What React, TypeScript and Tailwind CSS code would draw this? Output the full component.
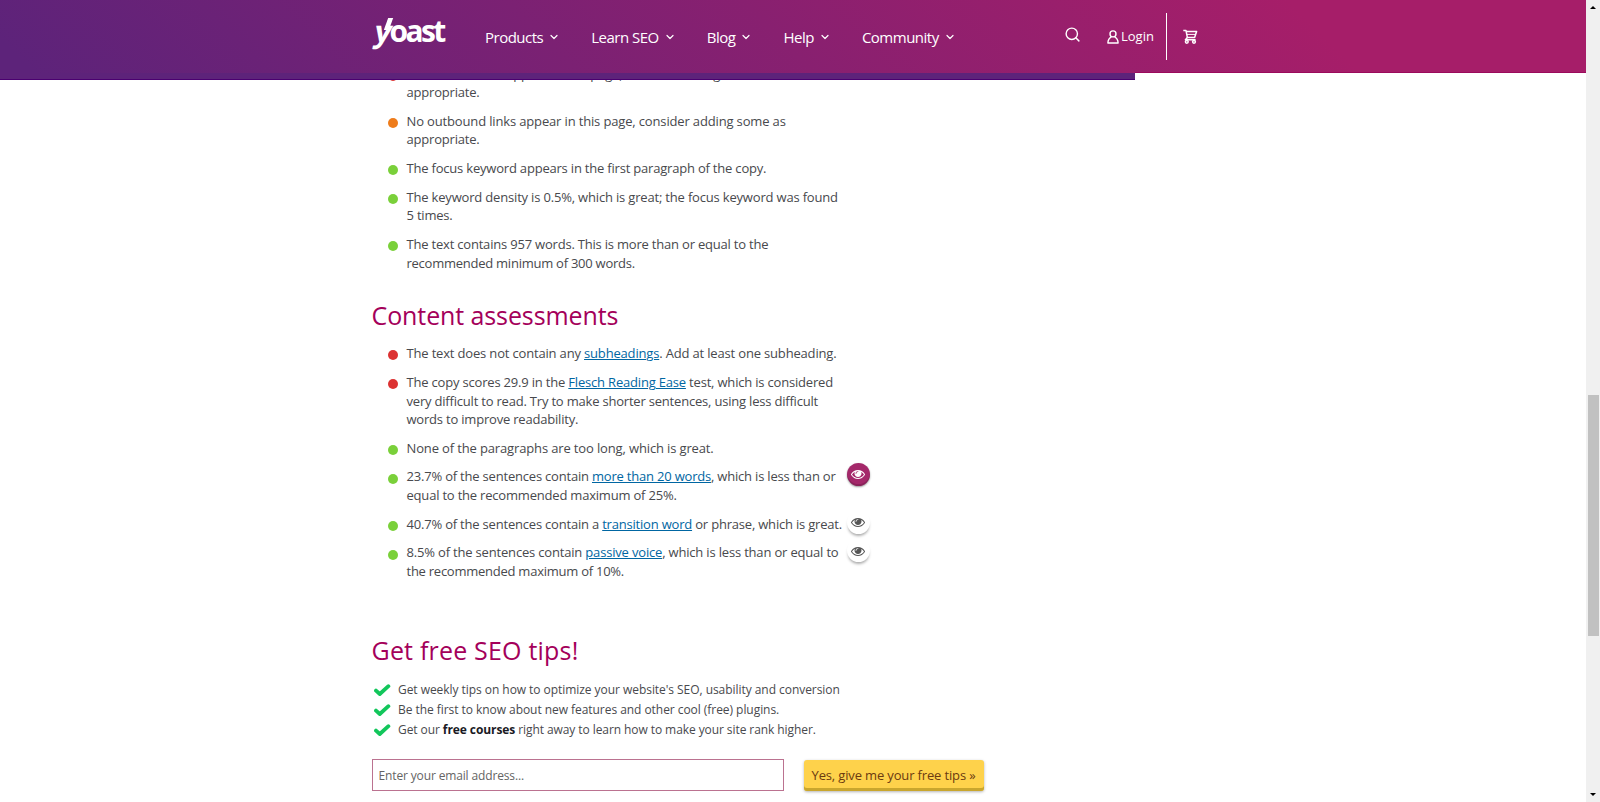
import type { ReactNode } from "react";
import { FiChevronDown, FiSearch } from "react-icons/fi";

const NAV = ["Products", "Learn SEO", "Blog", "Help", "Community"];

const DOTS = {
  red: "bg-[#dc3232]",
  orange: "bg-[#ee7c1b]",
  green: "bg-[#7ad03a]",
};

const EyeIcon = () => (
  <svg viewBox="0 0 1792 1792" className="w-[14px] h-[14px]" fill="currentColor">
    <path d="M1664 960q-152-236-381-353 61 104 61 225 0 185-131.5 316.5t-316.5 131.5-316.5-131.5-131.5-316.5q0-121 61-225-229 117-381 353 133 205 333.5 326.5t434.5 121.5 434.5-121.5 333.5-326.5zm-720-384q0-20-14-34t-34-14q-125 0-214.5 89.5t-89.5 214.5q0 20 14 34t34 14 34-14 14-34q0-86 61-147t147-61q20 0 34-14t14-34zm848 384q0 34-20 69-140 230-376.5 368.5t-499.5 138.5-499.5-139-376.5-368q-20-35-20-69t20-69q140-229 376.5-368t499.5-139 499.5 139 376.5 368q20 35 20 69z" />
  </svg>
);

const CheckIcon = () => (
  <svg
    viewBox="0 0 18 14"
    className="w-[18px] h-[14px] mt-[3px]"
    fill="none"
    stroke="#12c65b"
    strokeWidth="3.8"
    strokeLinecap="round"
    strokeLinejoin="round"
  >
    <path d="M3 7.6 L6.8 11 L15.4 3.2" />
  </svg>
);

const UserIcon = () => (
  <svg viewBox="0 0 12 14" className="w-3 h-[14px]" fill="none" stroke="white" strokeWidth="1.4">
    <circle cx="6" cy="3.9" r="3" />
    <path d="M4.2 7.2 C2 8.2 1 9.8 0.9 13 H11.1 C11 9.8 10 8.2 7.8 7.2" strokeLinejoin="round" />
  </svg>
);

const CartIcon = () => (
  <svg
    viewBox="0 0 15 15"
    className="w-[15px] h-[15px]"
    fill="none"
    stroke="white"
    strokeWidth="1.5"
    strokeLinejoin="round"
  >
    <path d="M0.3 1.6 H3 L4.4 8.6 H11.6 L13.6 2.4 H3.2" />
    <path d="M4 5.4 H12.4" strokeWidth="1" />
    <path d="M4.4 8.6 L2.4 10.8 H12.6" />
    <circle cx="3.8" cy="12.8" r="1.4" />
    <circle cx="11" cy="12.8" r="1.4" />
  </svg>
);

const Logo = () => (
  <div className="relative ml-[375px] w-[110px] flex items-baseline h-[42px] mt-[11px] leading-[40px] font-bold text-[30px] tracking-[-2.6px]">
    <span className="inline-block -skew-x-12">y</span>
    <span>oast</span>
    <span className="absolute left-[11px] top-[7px] w-[5px] h-[12px] bg-white -skew-x-[20deg]" />
  </div>
);

const Link = ({ children }: { children: ReactNode }) => (
  <a href="#" className="text-[#0066a2] underline underline-offset-1 decoration-1">
    {children}
  </a>
);

type ItemProps = {
  dot: keyof typeof DOTS;
  eye?: "on" | "off";
  children: ReactNode;
};

const Item = ({ dot, eye, children }: ItemProps) => (
  <li className="flex items-start mb-[10.1px]">
    <span className={`w-[10px] h-[10px] rounded-full mt-[6.2px] mr-[8.5px] shrink-0 ${DOTS[dot]}`} />
    <div className="w-[440px] shrink-0 whitespace-nowrap">{children}</div>
    {eye && (
      <button
        type="button"
        className={
          eye === "on"
            ? "w-[23px] h-[23px] -mt-[4.5px] -mb-6 rounded-full flex items-center justify-center bg-[#a4286a] text-white shadow-[inset_0_-2px_0_rgba(0,0,0,0.15),0_1px_2px_rgba(0,0,0,0.4)]"
            : "w-[23px] h-[23px] -mt-[4px] -mb-6 rounded-full flex items-center justify-center bg-white text-[#555] shadow-[0_3px_3px_-1px_rgba(0,0,0,0.35)]"
        }
      >
        <EyeIcon />
      </button>
    )}
  </li>
);

const Header = () => (
  <header className="relative z-10 h-20">
    <div className="h-[73px] bg-[linear-gradient(45deg,#5d237a_2%,#a61e69_82%)] flex text-white">
      <Logo />
      <nav className="flex w-[579px] text-[15px] leading-[22px] tracking-[-0.5px] pt-[26px]">
        {NAV.map((item) => (
          <a key={item} href="#" className="flex items-center h-[22px] mr-[30px] whitespace-nowrap">
            {item}
            <FiChevronDown size={12} className="ml-[5px] mr-px" strokeWidth={2.4} />
          </a>
        ))}
      </nav>
      <FiSearch size={17} className="mt-[26px]" />
      <a href="#" className="flex items-center h-[22px] ml-[26px] mt-[26px] text-[13px]">
        <UserIcon />
        <span className="ml-[2px]">Login</span>
      </a>
      <div className="w-[1.5px] h-[47px] bg-white mt-[13px] ml-[12px] mr-[16px]" />
      <div className="mt-[29px]">
        <CartIcon />
      </div>
    </div>
    {/* reading progress */}
    <div className="flex">
      <div className="w-[1134.5px] h-[7px] bg-[#5d237a] border-b border-[#4b0070]" />
      <div className="grow h-px -mt-px bg-[#9b0a5c]" />
    </div>
  </header>
);

const Scrollbar = () => (
  <div className="w-[14px] h-full bg-[#f0f0f0] flex flex-col items-center justify-between py-[6px]">
    <div className="border-x-[3px] border-x-transparent border-b-[3px] border-b-black" />
    <div className="w-[11px] h-[241px] bg-[#c1c1c1] mt-[386px] mb-auto" />
    <div className="border-x-[3px] border-x-transparent border-t-[3px] border-t-black" />
  </div>
);

export default function App() {
  return (
    <div className="flex h-[802px] w-[1600px] overflow-hidden bg-white font-['Open_Sans','Noto_Sans',sans-serif]">
      <div className="w-[1586px] h-full overflow-hidden">
        <Header />
        <main className="-mt-[15.5px] pl-[371.5px] text-[#48494d]">
          <ul className="pl-[16.5px] text-[13px] leading-[18.6px] tracking-[-0.2px]">
            <Item dot="red">
              <p className="tracking-[-0.15px]">
                No internal links appear in this page, consider adding some as
              </p>
              <p>appropriate.</p>
            </Item>
            <Item dot="orange">
              <p className="tracking-[-0.15px]">
                No outbound links appear in this page, consider adding some as
              </p>
              <p>appropriate.</p>
            </Item>
            <Item dot="green">The focus keyword appears in the first paragraph of the copy.</Item>
            <Item dot="green">
              <p className="tracking-[-0.18px]">
                The keyword density is 0.5%, which is great; the focus keyword was found
              </p>
              <p>5 times.</p>
            </Item>
            <Item dot="green">
              <p>The text contains 957 words. This is more than or equal to the</p>
              <p className="tracking-[-0.25px]">recommended minimum of 300 words.</p>
            </Item>
          </ul>

          <h2 className="mt-[26px] mb-3 text-[25px] leading-[34px] tracking-[-0.1px] text-[#a4005a]">
            Content assessments
          </h2>
          <ul className="pl-[16.5px] text-[13px] leading-[18.6px] tracking-[-0.2px]">
            <Item dot="red">
              <p className="tracking-[-0.17px]">
                The text does not contain any <Link>subheadings</Link>. Add at least one subheading.
              </p>
            </Item>
            <Item dot="red">
              <p className="tracking-[-0.19px]">
                The copy scores 29.9 in the <Link>Flesch Reading Ease</Link> test, which is considered
              </p>
              <p>very difficult to read. Try to make shorter sentences, using less difficult</p>
              <p>words to improve readability.</p>
            </Item>
            <Item dot="green">
              <p className="tracking-[-0.14px]">None of the paragraphs are too long, which is great.</p>
            </Item>
            <Item dot="green" eye="on">
              <p>
                23.7% of the sentences contain <Link>more than 20 words</Link>, which is less than or
              </p>
              <p>equal to the recommended maximum of 25%.</p>
            </Item>
            <Item dot="green" eye="off">
              40.7% of the sentences contain a <Link>transition word</Link> or phrase, which is great.
            </Item>
            <Item dot="green" eye="off">
              <p className="tracking-[-0.18px]">
                8.5% of the sentences contain <Link>passive voice</Link>, which is less than or equal to
              </p>
              <p className="tracking-[-0.25px]">the recommended maximum of 10%.</p>
            </Item>
          </ul>

          <h2 className="mt-[52.5px] mb-[12.5px] text-[25px] leading-[34px] tracking-[0.2px] text-[#a4005a]">
            Get free SEO tips!
          </h2>
          <ul className="text-[12px] leading-5 tracking-[-0.05px] whitespace-nowrap">
            <li className="flex gap-[7px] pl-[1.5px]">
              <CheckIcon />
              <span>Get weekly tips on how to optimize your website's SEO, usability and conversion</span>
            </li>
            <li className="flex gap-[7px] pl-[1.5px]">
              <CheckIcon />
              <span>Be the first to know about new features and other cool (free) plugins.</span>
            </li>
            <li className="flex gap-[7px] pl-[1.5px]">
              <CheckIcon />
              <span className="tracking-[-0.08px]">
                Get our <b className="text-[#1a1a24]">free courses</b> right away to learn how to make
                your site rank higher.
              </span>
            </li>
          </ul>

          <form className="flex mt-[19.5px] gap-5">
            <input
              type="email"
              placeholder="Enter your email address..."
              className="w-[412px] h-8 border border-[#bb7290] px-[6px] text-[12px] tracking-[-0.14px] placeholder:text-[#646464]"
            />
            <button
              type="button"
              className="w-[180px] h-[31px] mt-px pb-[2px] rounded-[3px] bg-[#fed24b] text-[#6b3a10] text-[13px] leading-[22px] tracking-[-0.15px] whitespace-nowrap shadow-[inset_0_-3px_0_#c9a62d,0_1px_3px_rgba(0,0,0,0.3)]"
            >
              Yes, give me your free tips »
            </button>
          </form>
        </main>
      </div>
      <Scrollbar />
    </div>
  );
}
